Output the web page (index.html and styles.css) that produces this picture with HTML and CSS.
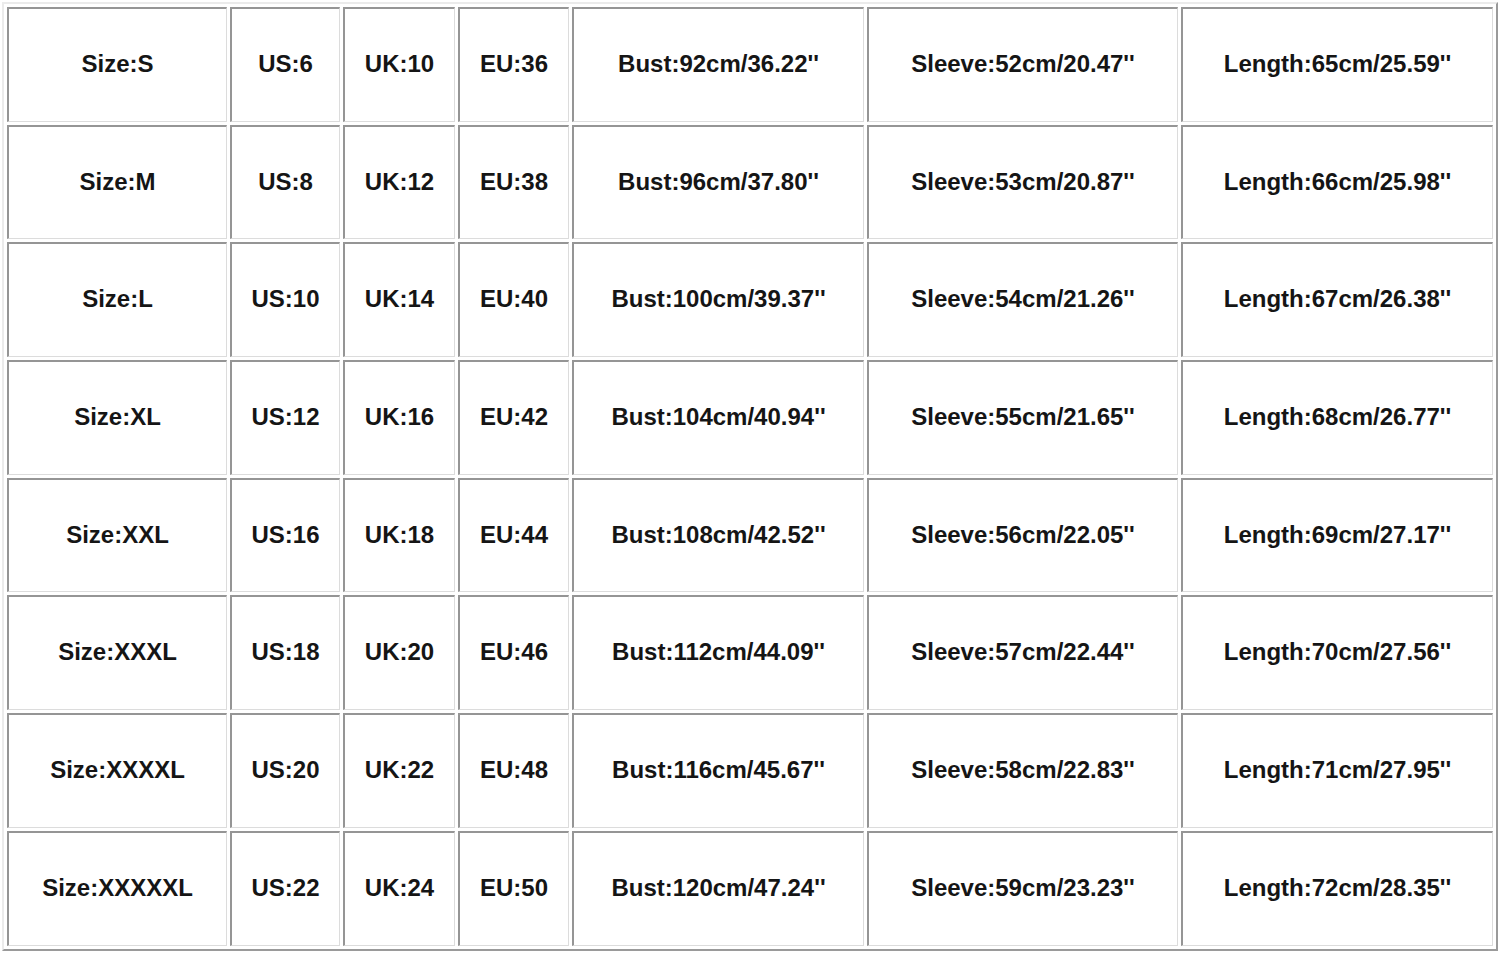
FILE: index.html
```html
<!DOCTYPE html>
<html>
<head>
<meta charset="utf-8">
<link rel="stylesheet" href="styles.css">
</head>
<body>
<table class="size-table">
<colgroup>
<col class="c-size"><col class="c-us"><col class="c-uk"><col class="c-eu"><col class="c-bust"><col class="c-sleeve"><col class="c-length">
</colgroup>
<tbody>
<tr><td>Size:S</td><td>US:6</td><td>UK:10</td><td>EU:36</td><td>Bust:92cm/36.22''</td><td>Sleeve:52cm/20.47''</td><td>Length:65cm/25.59''</td></tr>
<tr><td>Size:M</td><td>US:8</td><td>UK:12</td><td>EU:38</td><td>Bust:96cm/37.80''</td><td>Sleeve:53cm/20.87''</td><td>Length:66cm/25.98''</td></tr>
<tr><td>Size:L</td><td>US:10</td><td>UK:14</td><td>EU:40</td><td>Bust:100cm/39.37''</td><td>Sleeve:54cm/21.26''</td><td>Length:67cm/26.38''</td></tr>
<tr><td>Size:XL</td><td>US:12</td><td>UK:16</td><td>EU:42</td><td>Bust:104cm/40.94''</td><td>Sleeve:55cm/21.65''</td><td>Length:68cm/26.77''</td></tr>
<tr><td>Size:XXL</td><td>US:16</td><td>UK:18</td><td>EU:44</td><td>Bust:108cm/42.52''</td><td>Sleeve:56cm/22.05''</td><td>Length:69cm/27.17''</td></tr>
<tr><td>Size:XXXL</td><td>US:18</td><td>UK:20</td><td>EU:46</td><td>Bust:112cm/44.09''</td><td>Sleeve:57cm/22.44''</td><td>Length:70cm/27.56''</td></tr>
<tr><td>Size:XXXXL</td><td>US:20</td><td>UK:22</td><td>EU:48</td><td>Bust:116cm/45.67''</td><td>Sleeve:58cm/22.83''</td><td>Length:71cm/27.95''</td></tr>
<tr><td>Size:XXXXXL</td><td>US:22</td><td>UK:24</td><td>EU:50</td><td>Bust:120cm/47.24''</td><td>Sleeve:59cm/23.23''</td><td>Length:72cm/28.35''</td></tr>
</tbody>
</table>
</body>
</html>
```
FILE: styles.css
```css
html, body {
  margin: 0;
  padding: 0;
  background: #ffffff;
}
.size-table {
  margin: 2px;
  table-layout: fixed;
  border-collapse: separate;
  border-spacing: 3px;
  border-style: solid;
  border-width: 2px;
  border-color: #ebebeb #9a9a9a #9a9a9a #ebebeb;
  font-family: "Liberation Sans", Arial, sans-serif;
  font-weight: bold;
  font-size: 24px;
  color: #151515;
}
.size-table tr {
  height: 114.7px;
}
.size-table td {
  box-sizing: border-box;
  padding: 0 0 2px 0;
  text-align: center;
  vertical-align: middle;
  white-space: nowrap;
  border-style: solid;
  border-width: 2px 1px 1px 2px;
  border-color: #959595 #dcdcdc #dcdcdc #959595;
}
.c-size { width: 220px; }
.c-us { width: 110px; }
.c-uk { width: 112px; }
.c-eu { width: 111px; }
.c-bust { width: 292px; }
.c-sleeve { width: 311px; }
.c-length { width: 312px; }
```
